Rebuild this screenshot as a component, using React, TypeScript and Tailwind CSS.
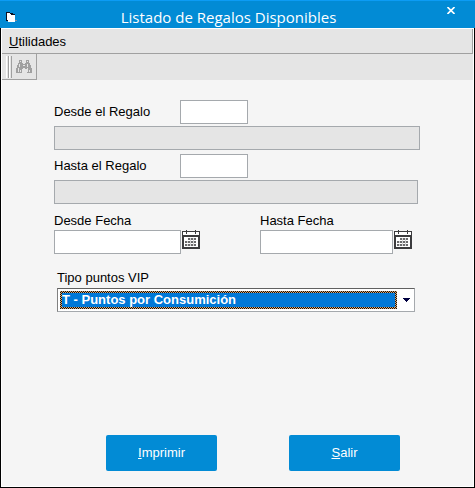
import React, { useState } from 'react';

const textBox = 'h-6 border border-[#a5a9ad] bg-white px-1 outline-none';

function FormIcon() {
    return (
        <svg width="12" height="12" viewBox="0 0 12 12" shapeRendering="crispEdges" aria-hidden="true">
            <path d="M0 1h4v1h1v1h4v1H5v6H0z" fill="#0b1020" />
            <path d="M1 2h3v1h1v1h4v7H2V9H1z" fill="#fff" />
            <path d="M5 2h2v1H5z" fill="#0b1020" />
            <path d="M9 9h2v1H9z" fill="#7d8ca0" />
        </svg>
    );
}

function BinocularsIcon() {
    return (
        <svg width="16" height="14" viewBox="0 0 16 14" fill="#a0a0a0" shapeRendering="crispEdges" aria-hidden="true">
            <path fillRule="evenodd" d="M3 0h3v3h1v1h2V3h1V0h3v3h1v2h1v3h1v5h-5V9H9V8H7v1H6v4H0V8h1V5h1V3h1zM4 1v1h1V1zM11 1v1h1V1zM3 4v3h1V4zM11 4v3h1V4zM2 8v4h1V8zM4 10v2h1v-2zM11 8v4h1V8zM13 10v2h1v-2zM7 5v1h2V5z" />
        </svg>
    );
}

function CalendarIcon() {
    return (
        <svg width="18" height="19" viewBox="0 0 18 19" shapeRendering="crispEdges" aria-hidden="true">
            <path d="M0 1h18v18H0z" fill="#3b3b3d" />
            <path d="M1 2h16v3H1zM2 7h14v10H2z" fill="#fff" />
            <path d="M4 0h1v4H4zM13 0h1v4h-1z" fill="#3b3b3d" />
            <path d="M6 8h2v2H6zM9 8h2v2H9zM12 8h2v2h-2zM3 11h2v2H3zM6 11h2v2H6zM9 11h2v2H9zM12 11h2v2h-2zM3 14h2v2H3zM6 14h2v2H6zM9 14h2v2H9zM12 14h2v2h-2z" fill="#6a6a6c" />
            <path d="M5 11h1v2H5zM8 8h1v8H8zM11 8h1v8h-1zM5 14h1v2H5z" fill="#d4d4d4" />
        </svg>
    );
}

function DateField({ id, label, boxClass }: { id: string; label: string; boxClass: string }) {
    const [value, setValue] = useState('');

    return (
        <div>
            <label htmlFor={id} className="block h-[18px] leading-[18px]">{label}</label>
            <div className="flex gap-px">
                <input id={id} type="text" value={value} onChange={e => setValue(e.target.value)} className={`${textBox} ${boxClass}`} />
                <button type="button" aria-label={`Calendario ${label}`} className="self-start">
                    <CalendarIcon />
                </button>
            </div>
        </div>
    );
}

export default function App() {
    const [desde, setDesde] = useState('');
    const [hasta, setHasta] = useState('');
    const [tipo, setTipo] = useState('T');

    return (
        <div className="flex min-h-screen flex-col bg-[#f5f5f5] font-['Liberation_Sans',Arial,sans-serif] text-[13px] text-black">
            {/* Barra de título */}
            <header className="flex h-7 items-center border-t border-[#0c9cf5] bg-[#028bd5] pr-5 pl-1.5 text-white">
                <div className="w-4 pt-1"><FormIcon /></div>
                <h1 className="flex-1 pt-1 pr-3 text-center font-['Open_Sans','Noto_Sans',sans-serif] text-[15px] leading-5">
                    Listado de Regalos Disponibles
                </h1>
                <button type="button" aria-label="Cerrar" className="pb-2">
                    <svg width="8" height="7" viewBox="0 0 8 7" stroke="#fff" strokeWidth="1.6" aria-hidden="true">
                        <path d="M.5 0l7 7M7.5 0l-7 7" />
                    </svg>
                </button>
            </header>

            <div className="flex flex-1 flex-col border-x border-b border-black">
                <div className="flex flex-1 flex-col border border-white">
                    {/* Menú */}
                    <nav className="h-[25px] border-r border-b border-[#a0a0a0] bg-[#e5e5e5] px-[7px]">
                        <button type="button" className="pt-px leading-6"><u>U</u>tilidades</button>
                    </nav>

                    {/* Barra de herramientas */}
                    <div className="flex h-[26px] bg-[#e5e5e5]">
                        <div className="flex items-center border-r border-b border-[#a0a0a0] pl-1">
                            <span className="h-[22px] w-[3px] border-r border-l border-l-white border-r-[#a0a0a0]" />
                            <span className="h-[22px] w-[3px] border-r border-l border-l-white border-r-[#a0a0a0]" />
                            <button type="button" aria-label="Buscar" className="px-1">
                                <BinocularsIcon />
                            </button>
                        </div>
                    </div>

                    <form className="flex flex-1 flex-col pt-5 pr-[53px] pl-[52px]" onSubmit={e => e.preventDefault()}>
                        <div className="flex items-center">
                            <label htmlFor="desde" className="w-[126px]">Desde el Regalo</label>
                            <input id="desde" type="text" value={desde} onChange={e => setDesde(e.target.value)} className={`${textBox} w-[68px]`} />
                        </div>
                        <input type="text" readOnly aria-label="Nombre del regalo inicial" className="mt-0.5 h-6 w-full border border-[#a5a9ad] bg-[#e5e5e5] px-1" />

                        <div className="mt-1 flex items-center">
                            <label htmlFor="hasta" className="w-[126px]">Hasta el Regalo</label>
                            <input id="hasta" type="text" value={hasta} onChange={e => setHasta(e.target.value)} className={`${textBox} w-[68px]`} />
                        </div>
                        <div className="mt-0.5 pr-0.5">
                            <input type="text" readOnly aria-label="Nombre del regalo final" className="block h-6 w-full border border-[#a5a9ad] bg-[#e5e5e5] px-1" />
                        </div>

                        <div className="mt-2 flex justify-between pr-2">
                            <DateField id="desde-fecha" label="Desde Fecha" boxClass="w-[127px]" />
                            <DateField id="hasta-fecha" label="Hasta Fecha" boxClass="w-[133px]" />
                        </div>

                        <div className="mt-4 pr-[5px] pl-[3px]">
                            <label htmlFor="tipo" className="block h-[18px] leading-4">Tipo puntos VIP</label>
                            <div className="flex h-6 items-center border border-t-[#606060] border-r-[#a5a9ad] border-b-[#a5a9ad] border-l-[#808080] bg-white pl-0.5">
                                <div className="h-[18px] flex-1 bg-[repeating-conic-gradient(#111_0_25%,#dfa870_0_50%)] bg-[length:2px_2px] p-0.5">
                                    <select
                                        id="tipo"
                                        value={tipo}
                                        onChange={e => setTipo(e.target.value)}
                                        className="block h-3.5 w-full appearance-none bg-[#0078d7] leading-[14px] font-bold text-white outline-none"
                                    >
                                        <option value="T">T - Puntos por Consumición</option>
                                    </select>
                                </div>
                                <svg width="17" height="4" viewBox="0 0 17 4" fill="#000040" shapeRendering="crispEdges" aria-hidden="true">
                                    <path d="M6 0h7v1H6zM7 1h5v1H7zM8 2h3v1H8zM9 3h1v1H9z" />
                                </svg>
                            </div>
                        </div>

                        <div className="mt-auto flex justify-between pr-5 pb-[15px] pl-[52px]">
                            <button type="button" className="h-9 w-[111px] rounded-xs bg-[#028bd5] text-white"><u>I</u>mprimir</button>
                            <button type="button" className="h-9 w-[111px] rounded-xs bg-[#028bd5] text-white"><u>S</u>alir</button>
                        </div>
                    </form>
                </div>
            </div>
        </div>
    );
}
